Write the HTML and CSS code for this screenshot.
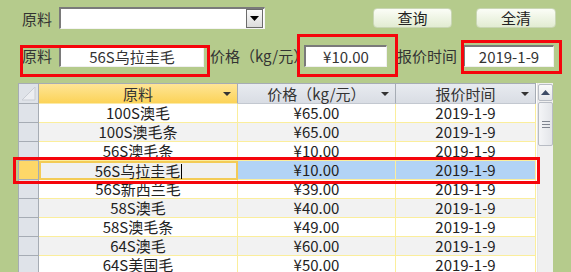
FILE: index.html
```html
<!DOCTYPE html>
<html>
  <head>
    <meta charset="utf-8">
    <title>原料报价</title>
    <link rel="stylesheet" href="styles.css">
  </head>
  <body>
    <div class="page">
      <div class="row-top">
        <span class="label">原料</span>
        <div class="combo"><span class="combo-btn"><svg width="9" height="5" viewBox="0 0 9 5"><path d="M0 0h9L4.5 5z" fill="#000"/></svg></span></div>
        <button class="btn btn-query">查询</button>
        <button class="btn btn-clear">全清</button>
      </div>

      <div class="row-fields">
        <span class="label">原料</span>
        <div class="field field-name">56S乌拉圭毛</div>
        <span class="label label-price">价格（kg/元）</span>
        <div class="field field-price">¥10.00</div>
        <span class="label label-date">报价时间</span>
        <div class="field field-date">2019-1-9</div>
      </div>

      <div class="grid-wrap">
        <div class="grid">
          <div class="sel corner"><svg width="18" height="18" viewBox="0 0 18 18"><path d="M3 16L16 3V16z" fill="#eceef2" stroke="#c9cdd4" stroke-width="1"/></svg></div>
          <div class="head head-first">原料<span class="arrow"></span></div>
          <div class="head">价格（kg/元）<span class="arrow"></span></div>
          <div class="head">报价时间<span class="arrow"></span></div>

          <div class="sel"></div><div class="cell">100S澳毛</div><div class="cell">¥65.00</div><div class="cell">2019-1-9</div>
          <div class="sel"></div><div class="cell alt">100S澳毛条</div><div class="cell alt">¥65.00</div><div class="cell alt">2019-1-9</div>
          <div class="sel"></div><div class="cell">56S澳毛条</div><div class="cell">¥10.00</div><div class="cell">2019-1-9</div>
          <div class="sel sel-current"></div><div class="cell cell-edit">56S乌拉圭毛<span class="caret"></span></div><div class="cell picked">¥10.00</div><div class="cell picked">2019-1-9</div>
          <div class="sel"></div><div class="cell">56S新西兰毛</div><div class="cell">¥39.00</div><div class="cell">2019-1-9</div>
          <div class="sel"></div><div class="cell alt">58S澳毛</div><div class="cell alt">¥40.00</div><div class="cell alt">2019-1-9</div>
          <div class="sel"></div><div class="cell">58S澳毛条</div><div class="cell">¥49.00</div><div class="cell">2019-1-9</div>
          <div class="sel"></div><div class="cell alt">64S澳毛</div><div class="cell alt">¥60.00</div><div class="cell alt">2019-1-9</div>
          <div class="sel"></div><div class="cell">64S美国毛</div><div class="cell">¥50.00</div><div class="cell">2019-1-9</div>
        </div>
        <div class="scrollbar">
          <div class="scroll-up"><svg width="9" height="5" viewBox="0 0 9 5"><path d="M0 5h9L4.5 0z" fill="#3d4b66"/></svg></div>
          <div class="scroll-thumb"><span></span><span></span><span></span></div>
        </div>
      </div>

      <!-- red annotation frames -->
      <div class="mark mark-name"></div>
      <div class="mark mark-price"></div>
      <div class="mark mark-date"></div>
      <div class="mark mark-row"></div>
    </div>
  </body>
</html>
```

FILE: styles.css
```css
body{
  margin: 0;
  background-color: #b5cb8c;
  font-family: "Noto Sans CJK SC", "DejaVu Sans", sans-serif;
  font-size: 15px;
  color: #222;
}
.page{
  position: relative;
  width: 571px;
  height: 272px;
  overflow: hidden;
}
.label{
  color: #333;
  line-height: 20px;
  white-space: nowrap;
}

/* top row */
.row-top{
  display: flex;
  align-items: flex-start;
  padding: 8px 0 0 22px;
  height: 22px;
}
.row-top .label{
  width: 37px;
  margin-top: 1px;
}
.combo{
  box-sizing: border-box;
  width: 206px;
  height: 22px;
  margin-top: -1px;
  background: #fff;
  border-top: 2px solid #7a7a7a;
  border-left: 2px solid #7a7a7a;
  border-right: 1px solid #f4f4f4;
  border-bottom: 1px solid #f4f4f4;
  display: flex;
  justify-content: flex-end;
  align-items: center;
}
.combo-btn{
  box-sizing: border-box;
  width: 17px;
  height: 19px;
  margin-right: 1px;
  border: 1px solid #6c6c6c;
  background: linear-gradient(#fafafa, #dcdcdc);
  display: flex;
  align-items: center;
  justify-content: center;
}
.btn{
  box-sizing: border-box;
  height: 20px;
  padding: 0;
  border: 1px solid #c9d6b4;
  border-radius: 4px;
  background: linear-gradient(#fbfdf7, #e2ecd2);
  font-family: inherit;
  font-size: 15px;
  line-height: 18px;
  color: #222;
}
.btn-query{
  width: 79px;
  margin-left: 108px;
}
.btn-clear{
  width: 80px;
  margin-left: 24px;
}

/* field row */
.row-fields{
  display: flex;
  align-items: center;
  padding: 15px 0 0 22px;
  height: 22px;
}
.row-fields .label{
  width: 37px;
}
.field{
  box-sizing: border-box;
  height: 22px;
  background: #fff;
  border-top: 2px solid #7a7a7a;
  border-left: 2px solid #7a7a7a;
  border-right: 1px solid #f0f0f0;
  border-bottom: 1px solid #f0f0f0;
  text-align: center;
  line-height: 19px;
  color: #333;
}
.field-name{
  width: 145px;
}
.row-fields .label-price{
  width: 94px;
  margin-left: 6px;
}
.field-price{
  width: 83px;
}
.row-fields .label-date{
  width: 60px;
  margin-left: 10px;
}
.field-date{
  width: 91px;
  margin-left: 6px;
}

/* datasheet */
.grid-wrap{
  display: flex;
  margin: 16px 0 0 18px;
  width: 535px;
  height: 200px;
  background: #fff;
}
.grid{
  display: grid;
  grid-template-columns: 20px 199px 158px 140px;
  grid-template-rows: 20px;
  grid-auto-rows: 19px;
  border-top: 1px solid #a6acb4;
  border-left: 1px solid #a6acb4;
  align-self: flex-start;
}
.grid > div{
  box-sizing: border-box;
}
.sel{
  background: #dfe3e9;
  border-right: 1px solid #a6acb4;
  border-bottom: 1px solid #a6acb4;
}
.corner{
  display: flex;
  align-items: flex-start;
}
.sel-current{
  background: #fdd768;
}
.head{
  position: relative;
  background: linear-gradient(#e8ebf0, #d9dde4);
  border-right: 1px solid #a6acb4;
  border-bottom: 1px solid #c3c8d0;
  text-align: center;
  line-height: 19px;
  color: #333;
}
.head-first{
  background: linear-gradient(#fee596, #fcd358);
  border-bottom: 1px solid #fbeaa8;
}
.arrow{
  position: absolute;
  right: 6px;
  top: 8px;
  width: 0;
  height: 0;
  border-left: 4px solid transparent;
  border-right: 4px solid transparent;
  border-top: 4px solid #333;
}
.cell{
  background: #fff;
  border-right: 1px solid #fbee9c;
  border-bottom: 1px solid #fbee9c;
  text-align: center;
  line-height: 18px;
  color: #222;
  white-space: nowrap;
}
.cell.alt{
  background: #f2f2f2;
}
.cell-edit{
  background: #f0f0f0;
  border: 2px solid #f3cb55;
  line-height: 15px;
}
.caret{
  display: inline-block;
  width: 1px;
  height: 15px;
  margin-left: 1px;
  background: #000;
  vertical-align: -2px;
}
.cell.picked{
  background: #b2d3f5;
}
.scrollbar{
  box-sizing: border-box;
  width: 18px;
  margin-left: 1px;
  background: #f0f0f0;
  border-left: 1px solid #e6e6e6;
  padding-top: 1px;
}
.scroll-up{
  box-sizing: border-box;
  height: 17px;
  border: 1px solid #b8bcc4;
  border-radius: 2px;
  background: linear-gradient(#fbfbfb, #e4e6ea);
  display: flex;
  align-items: center;
  justify-content: center;
}
.scroll-thumb{
  box-sizing: border-box;
  height: 44px;
  margin-top: 1px;
  border: 1px solid #b8bcc4;
  border-radius: 2px;
  background: linear-gradient(90deg, #f4f5f7, #e3e5e9);
  display: flex;
  flex-direction: column;
  justify-content: center;
  align-items: center;
  gap: 2px;
}
.scroll-thumb span{
  width: 8px;
  height: 1px;
  background: #7f8590;
}

/* annotation frames laid over the form */
.mark{
  position: absolute;
  box-sizing: border-box;
  border: 3px solid #f5050c;
}
.mark-name{
  left: 20px;
  top: 45px;
  width: 190px;
  height: 32px;
}
.mark-price{
  left: 297px;
  top: 34px;
  width: 101px;
  height: 43px;
}
.mark-date{
  left: 461px;
  top: 40px;
  width: 101px;
  height: 34px;
}
.mark-row{
  left: 13px;
  top: 157px;
  width: 527px;
  height: 27px;
}
```
